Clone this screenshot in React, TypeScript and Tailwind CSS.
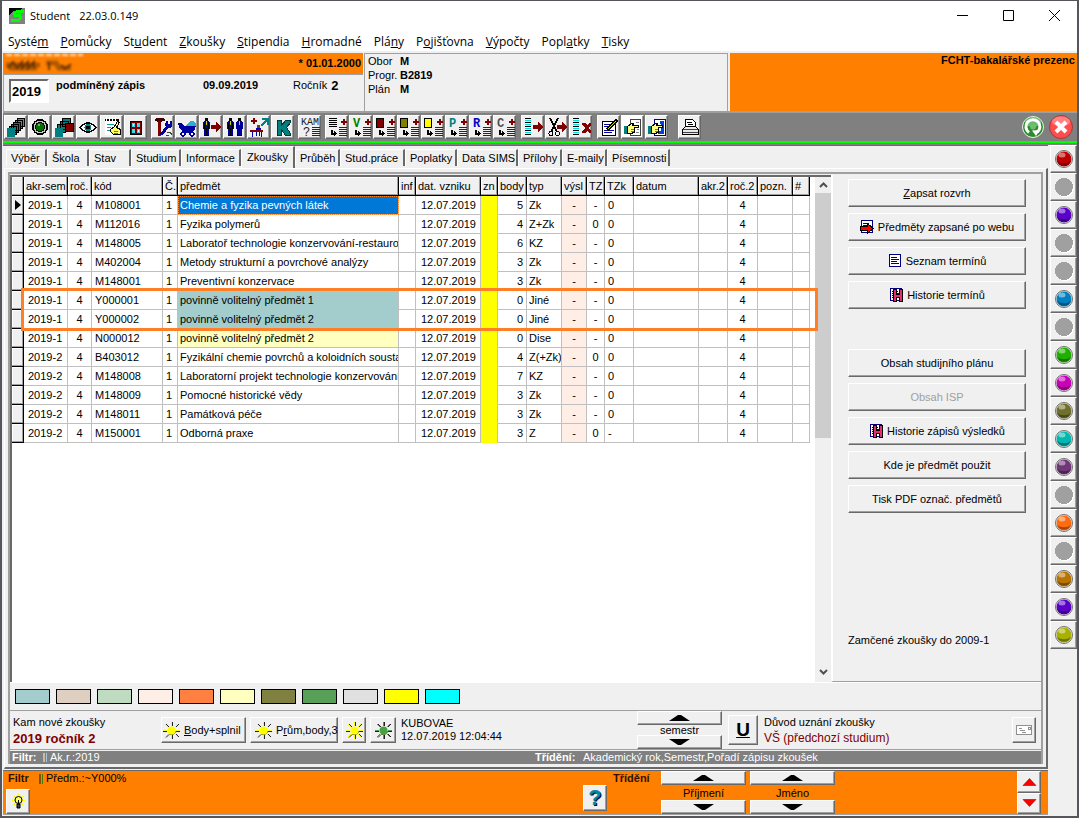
import type { ReactNode } from "react";

const RAISED =
  "border border-t-white border-l-white border-r-[#696969] border-b-[#696969] bg-[#f0f0f0] shadow-[inset_-1px_-1px_0_#a0a0a0]";

const MENU = [
  ["Systé", "m", ""],
  ["", "P", "omůcky"],
  ["St", "u", "dent"],
  ["", "Z", "koušky"],
  ["", "S", "tipendia"],
  ["", "H", "romadné"],
  ["Plá", "n", "y"],
  ["P", "o", "jišťovna"],
  ["", "V", "ýpočty"],
  ["Popl", "a", "tky"],
  ["", "T", "isky"],
];

const TABS = [
  { label: "Výběr", width: "w-[41px]" },
  { label: "Škola", width: "w-[42px]" },
  { label: "Stav", width: "w-[42px]" },
  { label: "Studium", width: "w-[50px]" },
  { label: "Informace", width: "w-[60px]" },
  { label: "Zkoušky", width: "w-[54px]", active: true },
  { label: "Průběh", width: "w-[45px]" },
  { label: "Stud.práce", width: "w-[65px]" },
  { label: "Poplatky", width: "w-[52px]" },
  { label: "Data SIMS", width: "w-[61px]" },
  { label: "Přílohy", width: "w-[44px]" },
  { label: "E-maily", width: "w-[45px]" },
  { label: "Písemnosti", width: "w-[63px]" },
];

const COLUMNS = [
  { label: "", width: "w-[12px]" },
  { label: "akr-sem", width: "w-[44px]" },
  { label: "roč.", width: "w-[24px]" },
  { label: "kód", width: "w-[71px]" },
  { label: "Č.", width: "w-[15px]" },
  { label: "předmět", width: "w-[221px]" },
  { label: "inf", width: "w-[17px]" },
  { label: "dat. vzniku", width: "w-[65px]" },
  { label: "zn", width: "w-[17px]" },
  { label: "body", width: "w-[29px]" },
  { label: "typ", width: "w-[35px]" },
  { label: "výsl", width: "w-[25px]" },
  { label: "TZ", width: "w-[18px]" },
  { label: "TZk", width: "w-[29px]" },
  { label: "datum", width: "w-[65px]" },
  { label: "akr.2", width: "w-[29px]" },
  { label: "roč.2", width: "w-[30px]" },
  { label: "pozn.", width: "w-[35px]" },
  { label: "#", width: "w-[17px]" },
];

type Row = {
  sem: string;
  code: string;
  name: string;
  points: number;
  type: string;
  tz: string;
  tzk: string;
  fill?: string;
};

const ROWS: Row[] = [
  { sem: "2019-1", code: "M108001", name: "Chemie a fyzika pevných látek", points: 5, type: "Zk", tz: "-", tzk: "0", fill: "bg-[#0078d7] text-white outline-1 -outline-offset-1 outline-dotted outline-[#ff8728]" },
  { sem: "2019-1", code: "M112016", name: "Fyzika polymerů", points: 4, type: "Z+Zk", tz: "0", tzk: "0" },
  { sem: "2019-1", code: "M148005", name: "Laboratoř technologie konzervování-restauro", points: 6, type: "KZ", tz: "-", tzk: "0" },
  { sem: "2019-1", code: "M402004", name: "Metody strukturní a povrchové analýzy", points: 3, type: "Zk", tz: "-", tzk: "0" },
  { sem: "2019-1", code: "M148001", name: "Preventivní konzervace", points: 3, type: "Zk", tz: "-", tzk: "0" },
  { sem: "2019-1", code: "Y000001", name: "povinně volitelný předmět 1", points: 0, type: "Jiné", tz: "-", tzk: "0", fill: "bg-[#a3cccc]" },
  { sem: "2019-1", code: "Y000002", name: "povinně volitelný předmět 2", points: 0, type: "Jiné", tz: "-", tzk: "0", fill: "bg-[#a3cccc]" },
  { sem: "2019-1", code: "N000012", name: "povinně volitelný předmět 2", points: 0, type: "Dise", tz: "-", tzk: "0", fill: "bg-[#ffffc0]" },
  { sem: "2019-2", code: "B403012", name: "Fyzikální chemie povrchů a koloidních soustav", points: 4, type: "Z(+Zk)", tz: "0", tzk: "0" },
  { sem: "2019-2", code: "M148008", name: "Laboratorní projekt technologie konzervování", points: 7, type: "KZ", tz: "-", tzk: "0" },
  { sem: "2019-2", code: "M148009", name: "Pomocné historické vědy", points: 3, type: "Zk", tz: "-", tzk: "0" },
  { sem: "2019-2", code: "M148011", name: "Památková péče", points: 3, type: "Zk", tz: "-", tzk: "0" },
  { sem: "2019-2", code: "M150001", name: "Odborná praxe", points: 3, type: "Z", tz: "0", tzk: "-" },
];

const SWATCHES = [
  "bg-[#a3cccc]",
  "bg-[#dfcfc0]",
  "bg-[#c0dcc0]",
  "bg-[#ffeee6]",
  "bg-[#ff8040]",
  "bg-[#ffffc0]",
  "bg-[#808040]",
  "bg-[#58a058]",
  "bg-[#e0e0e0]",
  "bg-[#ffff00]",
  "bg-[#00ffff]",
];

const BALLS = [
  "#c00000", "", "#5a00c8", "", "", "#0080c0", "", "#20b000", "#c800b8",
  "#70702c", "#00b8b0", "#703878", "", "#ff6c10", "", "#b87400", "#5a00c8", "#a8b000",
];

type Layer = { d: string; fill?: string; stroke?: string; w?: number };

function Art({ layers = [], children }: { layers?: Layer[]; children?: ReactNode }) {
  return (
    <svg viewBox="0 0 20 20" width="20" height="20" shapeRendering="crispEdges" aria-hidden="true">
      {layers.map((l, i) => (
        <path key={i} d={l.d} fill={l.fill ?? "none"} stroke={l.stroke} strokeWidth={l.w ?? 1} />
      ))}
      {children}
    </svg>
  );
}

const RED = "#800000";
const TEAL = "#008080";
const NAVY = "#000080";

// small list, red plus and an arrow shared by all "add" buttons
const ADD_BASE: Layer[] = [
  { d: "M12 10.5h8M12 12.5h8M12 14.5h8M12 16.5h8M12 18.5h8", stroke: RED },
  { d: "M14 4h2v-2h2v2h2v2h-2v2h-2v-2h-2z", fill: RED },
  { d: "M4.5 13v3.5h3", stroke: "#000", w: 2 },
  { d: "M7 13l3 3.5l-3 3.5z", fill: "#000" },
];

function AddIcon({ layers = [], letter, color }: { layers?: Layer[]; letter?: string; color?: string }) {
  return (
    <Art layers={[...ADD_BASE, ...layers]}>
      {letter && (
        <text x="2" y="10" fill={color} fontFamily="Liberation Mono" fontSize="12" fontWeight="bold">
          {letter}
        </text>
      )}
    </Art>
  );
}

const STRIPES: Layer[] = [
  { d: "M2 1.5h6M2 5.5h6M2 9.5h6M2 13.5h6M2 17.5h6", stroke: "#000" },
  { d: "M2 3.5h6M2 7.5h6M2 11.5h6M2 15.5h6", stroke: "#00e0e0" },
];
const RED_ARROW = "M10 8h5v-4l5 6l-5 6v-4h-5z";

const person = (x: number): Layer[] => [
  { d: `M${x + 2} 1h3v3h-3z`, fill: "#000" },
  { d: `M${x + 1} 4h5v1h1v7h-1v7h-5v-7h-1v-7h1z`, fill: "#0000a0" },
  { d: `M${x + 1.5} 6v6M${x + 5.5} 6v6M${x + 3.5} 11v8M${x + 1} 18.5h5`, stroke: "#000" },
  { d: `M${x + 3} 4h1v4h-1z`, fill: "#d0d000" },
];

const PASSING_HAND: Layer[] = [
  { d: "M1 9h3v8h-3z", fill: TEAL },
  { d: "M4.5 9.5l4-3h2l-1 2h6v2h-4v5h-2v1h-5z", fill: "#ffff80", stroke: "#000" },
  { d: "M8 12.5h3M8 14.5h3", stroke: "#808000" },
];

const TOOL_GROUPS: { title: string; icon: ReactNode; lit?: boolean }[][] = [
  [
    {
      title: "Karty",
      icon: (
        <Art
          layers={[
            { d: "M11.5 1.5h7v8h-7zM9.5 3.5h7v8h-7z", fill: "#909000", stroke: "#000" },
            { d: "M7.5 5.5h7v8h-7zM5.5 7.5h7v8h-7zM3.5 9.5h7v8h-7z", fill: TEAL, stroke: "#000" },
            { d: "M1 11h8v9h-8z", fill: TEAL },
          ]}
        />
      ),
    },
    {
      title: "Výběr",
      icon: (
        <Art>
          <circle cx="10" cy="10" r="8" fill="#000" />
          <circle cx="10" cy="10" r="6.500" fill="#c8c8c8" />
          <circle cx="10" cy="10" r="5" fill="#000" />
          <circle cx="10" cy="10" r="4" fill="#007000" />
          <path d="M8 7h2v2h-2z" fill="#60c060" />
        </Art>
      ),
    },
    {
      title: "Skupiny",
      icon: (
        <Art
          layers={[
            { d: "M8.5 1.5h8v8h-8zM6.5 4.5h8v8h-8zM3.5 7.5h8v8h-8z", fill: TEAL, stroke: "#000" },
            { d: "M1 11h8v9h-8z", fill: TEAL },
            { d: "M11.5 6.5h8v8h-8z", fill: RED, stroke: "#000" },
          ]}
        />
      ),
    },
    {
      title: "Náhled",
      icon: (
        <Art>
          <path d="M2 10.500q8-9 16 0q-8 9-16 0z" fill="#fff" stroke="#000" strokeWidth="1.500" />
          <circle cx="10" cy="10.500" r="3.500" fill={TEAL} />
          <circle cx="10" cy="10.500" r="2" fill="#000" />
        </Art>
      ),
    },
    {
      title: "Poznámky",
      icon: (
        <Art
          layers={[
            { d: "M3 3h13v15h-13z", fill: "#fff" },
            { d: "M3 2.5h14", stroke: "#000", w: 2 },
            { d: "M4.5 0v4M7.5 0v4M10.5 0v4M13.5 0v4", stroke: "#fff" },
            { d: "M5 7.5h7M5 10.5h4M5 13.5h3", stroke: "#00a0a0" },
            { d: "M8.5 12.5l4-3l3-5l2 1l-3 5l4 2v5h-7l-3-3z", fill: "#ffff60", stroke: "#000" },
            { d: "M12 14.5h4M12 16.5h4", stroke: "#808000" },
          ]}
        />
      ),
    },
    {
      title: "Okno",
      icon: (
        <Art
          layers={[
            { d: "M4.5 4.5h11v13h-11z", fill: RED, stroke: "#000" },
            { d: "M6 6h3v4h-3zM11 6h3v4h-3zM6 12h3v4h-3zM11 12h3v4h-3z", fill: "#40d8e8" },
            { d: "M7 7h1v2h-1zM12 13h1v2h-1z", fill: "#fff" },
          ]}
        />
      ),
    },
  ],
  [
    {
      title: "Nástroje",
      icon: (
        <Art
          layers={[
            { d: "M2 2l2-1h6l2 2v1h-3l-1 2h-3l-1-2h-2z", fill: "#400000" },
            { d: "M5 4h3v15h-3z", fill: RED },
            { d: "M8 18l7-9", stroke: "#0000a0", w: 3 },
            { d: "M13 4h2v3h2v-3h2v5l-2 2h-3l-2-2z", fill: "#0000a0" },
            { d: "M14 15.5h3l2 2M13 18.5h3", stroke: "#404040" },
          ]}
        />
      ),
    },
    {
      title: "Kočárek",
      icon: (
        <Art>
          <path d="M1 6h3l3 3h12l-2 5l-3 2h-7l-4-4l-2-5z" fill="#0000a0" />
          <path d="M9 9l4-5h3l3 3v2z" fill="#30b0c8" />
          <circle cx="6" cy="17" r="2" fill="#fff" stroke="#0000a0" strokeWidth="1.500" />
          <circle cx="15" cy="17" r="2" fill="#fff" stroke="#0000a0" strokeWidth="1.500" />
        </Art>
      ),
    },
    { title: "Přesun studenta", icon: <Art layers={[...person(2), { d: RED_ARROW, fill: RED }]} /> },
    { title: "Dvojice", icon: <Art layers={[...person(2), ...person(11)]} /> },
    {
      title: "Postup",
      icon: (
        <Art
          layers={[
            { d: "M2 3h2v-2h2v2h2v2h-2v2h-2v-2h-2z", fill: RED },
            { d: "M12 9l6-6", stroke: TEAL, w: 2 },
            { d: "M13 1h7v7h-2v-3l-3-2h-2z", fill: TEAL },
            { d: "M8 8h3v3h-3z", fill: "#505000" },
            { d: "M7 11h5v3h-5z", fill: "#0000c0" },
            { d: "M1 13h13v2h-13z", fill: RED },
            { d: "M3.5 15v5M12.5 15v5M7.5 15v4M10.5 15v4", stroke: "#0000c0" },
          ]}
        />
      ),
    },
    {
      title: "K",
      icon: (
        <Art layers={[{ d: "M4.5 3.5h4v5l4-5h5v2l-4 5l4 6v2h-5l-4-6v6h-4z", fill: TEAL, stroke: "#003838" }]} />
      ),
    },
  ],
  [
    {
      title: "Kam",
      icon: (
        <Art layers={[{ d: "M12 10.5h8M12 12.5h8M12 14.5h8M12 16.5h8M12 18.5h8", stroke: RED }]}>
          <text x="1" y="8" fill="#202020" fontFamily="Liberation Mono" fontSize="10">KAM</text>
          <text x="3" y="19" fill="#202020" fontFamily="Liberation Mono" fontSize="12">?</text>
        </Art>
      ),
    },
  ],
  [
    { title: "Přidat seznam", icon: <AddIcon layers={[{ d: "M2 1.5h8M2 3.5h8M2 5.5h8M2 7.5h8M2 9.5h8", stroke: "#000" }]} /> },
    { title: "Přidat V", icon: <AddIcon letter="V" color="#008000" /> },
    { title: "Přidat červené", icon: <AddIcon layers={[{ d: "M1.5 1.5h7v9h-7z", fill: RED, stroke: "#000" }]} /> },
    { title: "Přidat olivové", icon: <AddIcon layers={[{ d: "M1.5 1.5h7v9h-7z", fill: "#808000", stroke: "#000" }]} /> },
    { title: "Přidat žluté", icon: <AddIcon layers={[{ d: "M1.5 1.5h7v9h-7z", fill: "#ffff00", stroke: "#000" }]} /> },
    { title: "Přidat P", icon: <AddIcon letter="P" color={TEAL} /> },
    { title: "Přidat R", icon: <AddIcon letter="R" color="#0000c0" /> },
    { title: "Přidat C", icon: <AddIcon letter="C" color="#505050" /> },
  ],
  [
    { title: "Vyjmout ze seznamu", icon: <Art layers={[...STRIPES, { d: RED_ARROW, fill: RED }]} /> },
    {
      title: "Odstřihnout",
      icon: (
        <Art layers={[{ d: RED_ARROW, fill: RED }]}>
          <path d="M3 1l7 14M11 1l-7 14" stroke="#000" strokeWidth="1.500" />
          <circle cx="4" cy="16.500" r="2" fill="none" stroke="#000" />
          <circle cx="10.500" cy="16.500" r="2" fill="none" stroke="#000" />
        </Art>
      ),
    },
    { title: "Smazat", icon: <Art layers={[...STRIPES, { d: "M11 6h3l2 2l2-2h2v2l-2 3l2 3v2h-2l-2-2l-2 2h-3v-2l3-3l-3-3z", fill: RED }]} /> },
  ],
  [
    {
      title: "Upravit",
      icon: (
        <Art
          layers={[
            { d: "M3.5 4.5h13v14h-13z", fill: "#fff", stroke: "#000" },
            { d: "M5 7.5h7M5 9.5h5M5 13.5h10M5 15.5h8", stroke: "#0000a0" },
            { d: "M8 13l10-10", stroke: "#000", w: 3 },
            { d: "M9 12l8-8", stroke: "#e0e000" },
          ]}
        />
      ),
    },
    {
      title: "Předat list",
      lit: true,
      icon: (
        <Art
          layers={[
            { d: "M7.5 2.5h10v16h-10z", fill: "#fff", stroke: "#404040" },
            { d: "M13 5.5h3M13 8.5h3M14 12.5h2M13 15.5h3", stroke: "#808080" },
            ...PASSING_HAND,
          ]}
        />
      ),
    },
    {
      title: "Předat složku",
      icon: (
        <Art
          layers={[
            { d: "M7.5 2.5h11v16h-11z", fill: "#fff", stroke: "#000080" },
            { d: "M13 4h4v13h-6v-3h3v-7h-1z", fill: "#0040e0" },
            ...PASSING_HAND,
          ]}
        />
      ),
    },
  ],
  [
    {
      title: "Tisk",
      icon: (
        <Art
          layers={[
            { d: "M5.5 9v-6.500h7l3 3v4z", fill: "#fff", stroke: "#000" },
            { d: "M7 5.5h5M8 7.5h5", stroke: "#000" },
            { d: "M2.5 12.5l3-3h10l3 3v5h-16z", fill: "#e8e8e8", stroke: "#000" },
            { d: "M3 12.500h15M3 15.500h15", stroke: "#404040" },
          ]}
        />
      ),
    },
  ],
];

const TOOL_GAPS = ["ml-px", "ml-[3px]", "ml-[3px]", "ml-[3px]", "ml-1", "ml-1", "ml-[9px]"];

function Toolbar() {
  return (
    <div className="flex items-center border-t-2 border-[#a0a0a0] bg-[#808080] pt-0.5">
      {TOOL_GROUPS.map((group, g) => (
        <div key={g} className={`flex shrink-0 ${TOOL_GAPS[g]}`}>
          {group.map((tool) => (
            <button
              key={tool.title}
              aria-label={tool.title}
              className={`mr-px flex h-6 w-[23px] items-center justify-center ${RAISED} ${tool.lit ? "bg-white" : ""}`}
            >
              {tool.icon}
            </button>
          ))}
        </div>
      ))}
      <div className="ml-auto flex gap-1 pr-1">
        <button aria-label="Obnovit">
          <svg viewBox="0 0 24 24" className="h-6 w-6">
            <circle cx="12" cy="12" r="10.500" fill="#2f8a2f" stroke="#e8f8e8" strokeWidth="1" />
            <ellipse cx="12" cy="7" rx="8" ry="5" fill="#9ad79a" opacity=".6" />
            <circle cx="12" cy="11.500" r="3" fill="#6cc06c" />
            <path d="M8 17.500a7 7 0 1 1 8.500-.5" fill="none" stroke="#fff" strokeWidth="3" />
            <path d="M11 15.500l8-.5l-4 6z" fill="#fff" />
          </svg>
        </button>
        <button aria-label="Zavřít záznam">
          <svg viewBox="0 0 24 24" className="h-6 w-6">
            <circle cx="12" cy="12" r="11.500" fill="#ff4d4d" stroke="#9a3030" strokeWidth=".8" />
            <ellipse cx="12" cy="6.500" rx="9" ry="5" fill="#ff9a9a" opacity=".7" />
            <path d="M7 7l10 10M17 7l-10 10" stroke="#fff" strokeWidth="4" />
          </svg>
        </button>
      </div>
    </div>
  );
}

function PageIcon({ kind }: { kind: "web" | "list" | "history" }) {
  return (
    <svg viewBox="0 0 14 14" width="14" height="14" shapeRendering="crispEdges" aria-hidden="true">
      <path d="M1.500 .5h11v12h-11z" fill="#fff" stroke="#000080" />
      <path d="M3 3.500h6M3 5.500h8M3 7.500h6M3 9.500h8" stroke="#000080" />
      {kind === "web" && <path d="M.5 6.500h7v-3l5.500 5l-5.500 5v-3h-7z" fill="#ff0000" stroke="#000" />}
      {kind === "history" && (
        <path d="M4.500 1.500h3v5h3v-5h3v12h-3v-4h-3v4h-3z" fill="#e03070" stroke="#000" />
      )}
    </svg>
  );
}

function SideButton({ icon, disabled, children }: { icon?: "web" | "list" | "history"; disabled?: boolean; children: ReactNode }) {
  return (
    <button
      disabled={disabled}
      className={`flex h-7 items-center justify-center gap-1 disabled:text-[#a0a0a0] ${RAISED}`}
    >
      {icon && <PageIcon kind={icon} />}
      <span>{children}</span>
    </button>
  );
}

function Sun({ core }: { core: string }) {
  return (
    <svg viewBox="0 0 17 17" width="17" height="17" className="shrink-0" aria-hidden="true">
      <path d="M9.500 0v4M9.500 13v4M0 9.500h4M13 9.500h4M3 2l3 3M13 12l3 3M16 2l-3 3M3 15.500l3-3" stroke="#202020" strokeWidth="1" />
      <path d="M8.500 0v4M8.500 13v4M0 8.500h4M13 8.500h4M2 2l3 3M12 12l3 3M15 2l-3 3M2 15l3-3" stroke={core} strokeWidth="1" />
      <path d="M6 12q5 2 7-3" fill="none" stroke="#606000" />
      <circle cx="8.500" cy="8.500" r="4" fill={core} />
    </svg>
  );
}

function Spinner({ label, className = "" }: { label: string; className?: string }) {
  return (
    <div className={`flex w-[85px] flex-col justify-between text-center ${className}`}>
      <button aria-label={`${label} nahoru`} className={`flex h-[14px] items-center justify-center ${RAISED}`}>
        <svg viewBox="0 0 21 6" width="21" height="6"><path d="M0 6l9-6h3l9 6z" /></svg>
      </button>
      <span className="leading-[10px]">{label}</span>
      <button aria-label={`${label} dolů`} className={`flex h-[14px] items-center justify-center ${RAISED}`}>
        <svg viewBox="0 0 21 6" width="21" height="6"><path d="M0 0l9 6h3l9-6z" /></svg>
      </button>
    </div>
  );
}

function Ball({ color }: { color: string }) {
  if (!color) {
    return (
      <svg viewBox="0 0 20 20" width="20" height="20" shapeRendering="crispEdges" aria-hidden="true">
        <circle cx="11" cy="11" r="9" fill="#fff" />
        <circle cx="10" cy="10" r="9" fill="#a0a0a0" />
      </svg>
    );
  }
  return (
    <svg viewBox="0 0 20 20" width="20" height="20" aria-hidden="true">
      <circle cx="10" cy="10" r="8.500" fill="#e8e8e8" stroke="#707070" strokeWidth="1" />
      <circle cx="10" cy="10" r="7.500" fill={color} />
      <path d="M3 12a7.500 7.500 0 0 0 14 0a9 6 0 0 1-14 0z" fill="#000" opacity=".35" />
      <ellipse cx="8" cy="6" rx="3.500" ry="2.500" fill="#fff" opacity=".45" />
    </svg>
  );
}

function ExamTable() {
  const cell = "border-r border-b border-[#c0c0c0]";
  return (
    <div className="relative w-[798px] shrink-0">
      <table className="w-[798px] table-fixed border-separate border-spacing-0 leading-[18px]">
        <colgroup>
          {COLUMNS.map((c, i) => (
            <col key={i} className={c.width} />
          ))}
        </colgroup>
        <thead>
          <tr className="h-[19px]">
            {COLUMNS.map((c, i) => (
              <th
                key={i}
                className="h-[19px] overflow-hidden border-r border-b border-black bg-[#f0f0f0] py-0 pr-0 pl-0.5 text-left font-normal whitespace-nowrap shadow-[inset_-1px_-1px_0_#a0a0a0,inset_1px_1px_0_#fff]"
              >
                {c.label}
              </th>
            ))}
          </tr>
        </thead>
        <tbody className="[&_td]:h-[19px] [&_td]:overflow-hidden [&_td]:py-0 [&_td]:whitespace-nowrap">
          {ROWS.map((r, i) => (
            <tr key={i}>
              <td className="border-r border-b border-black bg-[#f0f0f0] p-0 shadow-[inset_-1px_-1px_0_#a0a0a0,inset_1px_1px_0_#fff]">
                {i === 0 && (
                  <svg viewBox="0 0 6 10" width="6" height="10" className="ml-[3px]"><path d="M0 0l6 5l-6 5z" /></svg>
                )}
              </td>
              <td className={`pl-1 ${cell}`}>{r.sem}</td>
              <td className={`text-center ${cell}`}>4</td>
              <td className={`pl-[3px] ${cell}`}>{r.code}</td>
              <td className={`pl-[3px] ${cell}`}>1</td>
              <td className={`pl-0.5 ${cell} ${r.fill ?? ""}`}>{r.name}</td>
              <td className={cell} />
              <td className={`pr-1 text-right ${cell}`}>12.07.2019</td>
              <td className={`bg-[#ffff00] ${cell} border-b-[#ffff00]`} />
              <td className={`pr-[3px] text-right ${cell}`}>{r.points}</td>
              <td className={`pl-0.5 ${cell}`}>{r.type}</td>
              <td className={`bg-[#ffeee6] text-center ${cell}`}>-</td>
              <td className={`text-center ${cell}`}>{r.tz}</td>
              <td className={`pl-[3px] ${cell}`}>{r.tzk}</td>
              <td className={cell} />
              <td className={cell} />
              <td className={`text-center ${cell}`}>4</td>
              <td className={cell} />
              <td className={cell} />
            </tr>
          ))}
        </tbody>
      </table>
      {/* frame over the two elective rows */}
      <div className="absolute top-[111px] left-[9px] h-[43px] w-[797px] border-3 border-[#ff7f27]" />
    </div>
  );
}

function Chevron({ down }: { down?: boolean }) {
  return (
    <svg viewBox="0 0 9 6" width="9" height="6" aria-hidden="true">
      <path d={down ? "M1 1l3.500 3.500l3.500-3.500" : "M1 5l3.500-3.500l3.500 3.500"} fill="none" stroke="#505050" strokeWidth="2" />
    </svg>
  );
}

function HeaderPanel() {
  return (
    <div className="flex h-[58px]">
      <div className="flex w-[360px] flex-col">
        <div className="flex h-[21px] items-center justify-between bg-[#ff8000] pr-0.5 font-bold">
          <svg viewBox="0 0 80 20" className="h-5 w-20 blur-[1px]" aria-hidden="true">
            <path d="M3 11h34M6 14h28M43 9h10l3 5h12" fill="none" stroke="#b05800" strokeWidth="5" />
            <path d="M5 14l5-6l4 6l5-6v6l6-6v6l6-6v6M46 8v8M58 11l4 4l6-5" fill="none" stroke="#6a3400" strokeWidth="2" />
            <path d="M3 1h78" stroke="#ffe0c0" strokeWidth="2" strokeDasharray="6 2" />
          </svg>
          <span>* 01.01.2000</span>
        </div>
        <div className="flex flex-1 border-t border-l border-[#a0a0a0] pt-1">
          <input
            aria-label="Rok"
            defaultValue="2019"
            className="ml-[5px] h-6 w-10 border-2 border-t-[#696969] border-r-white border-b-white border-l-[#696969] bg-white pl-px text-[13px] font-bold"
          />
          <span className="ml-[7px] w-[147px] font-bold">podmíněný zápis</span>
          <span className="w-[90px] font-bold">09.09.2019</span>
          <span>Ročník</span>
          <b className="ml-1 text-[13px] leading-[13px]">2</b>
        </div>
      </div>
      <div className="ml-px flex w-[364px] flex-col border-t border-r border-l border-t-[#a0a0a0] border-r-[#a0a0a0] border-l-[#a0a0a0] pl-[3px] leading-[14px]">
        <div className="flex"><span className="w-8">Obor</span><b>M</b></div>
        <div className="flex"><span className="w-8">Progr.</span><b>B2819</b></div>
        <div className="flex"><span className="w-8">Plán</span><b>M</b></div>
      </div>
      <div className="ml-0.5 flex flex-1 justify-end overflow-hidden bg-[#ff8000]">
        <b className="w-[136px] overflow-hidden leading-[14px] whitespace-nowrap">FCHT-bakalářské prezenc</b>
      </div>
    </div>
  );
}

export default function App() {
  return (
    <div className="flex h-screen min-h-[760px] flex-col overflow-hidden border-t border-r-2 border-b-2 border-l-2 border-[#55555c] bg-[#f0f0f0] pb-px pl-px font-['Liberation_Sans',Arial,sans-serif] text-[11px] leading-[13px] text-black">
      <div className="-ml-px bg-white font-['Open_Sans','Noto_Sans',sans-serif] text-[12px]">
        <div className="flex h-[29px] items-center pl-[7px]">
          <svg viewBox="0 0 16 16" width="16" height="16" shapeRendering="crispEdges" aria-hidden="true">
            <path d="M0 0h16v16h-16z" fill="#808080" />
            <path d="M0 0h13l-3 3h-5l-5 4z" fill="#000" />
            <path d="M14 3.500h-6l-3 2l1 2h5l1 2l-2 3h-8" fill="none" stroke="#00ff00" strokeWidth="2.500" />
            <path d="M15 1v4h-2v-2z" fill="#00ff00" />
          </svg>
          <span className="ml-[5px] text-[11px]">Student</span>
          <span className="ml-[9px] text-[11px]">22.03.0.149</span>
          <div className="ml-auto flex">
            {["M0 5.500h11", "M.5.500h10v10h-10z", "M0 0l11 11M11 0l-11 11"].map((d, i) => (
              <button key={i} aria-label={["Minimalizovat", "Maximalizovat", "Zavřít"][i]} className="flex h-7 w-[46px] items-center justify-center">
                <svg viewBox="0 0 11 11" width="11" height="11"><path d={d} fill="none" stroke="#000" /></svg>
              </button>
            ))}
          </div>
        </div>
        <nav className="flex h-[21px] items-center gap-3 pt-px pl-[6px]">
          {MENU.map(([before, key, after]) => (
            <button key={before + key + after}>
              {before}<u>{key}</u>{after}
            </button>
          ))}
        </nav>
      </div>
      <div className="h-0.5 shrink-0" />
      <HeaderPanel />
      <Toolbar />
      <div className="h-1.5 shrink-0 border-y-2 border-[#808080] bg-[#00ff00]" />

      <div className="flex min-h-0 flex-1">
        <div className="flex min-w-0 flex-1 flex-col border-t border-[#696969]">
          <div role="tablist" className="flex h-[22px] items-end pl-[3px]">
            {TABS.map((t) => (
              <button
                key={t.label}
                role="tab"
                aria-selected={!!t.active}
                className={`${t.width} border-t border-r-2 border-l border-t-white border-r-[#696969] border-l-white text-left whitespace-nowrap ${
                  t.active ? "h-[22px] pb-px pl-[5px]" : "mb-0.5 h-[17px] pt-px pl-1"
                }`}
              >
                {t.label}
              </button>
            ))}
          </div>

          <div className="ml-px flex min-h-0 flex-1 flex-col border-t border-r-2 border-b-2 border-l border-t-white border-r-[#696969] border-b-[#696969] border-l-white p-[3px]">
            <div className="flex min-h-0 flex-1 flex-col border-x-2 border-t-2 border-[#a0a0a0]">
              <div className="flex min-h-0 flex-1 pt-px">
                <div className="flex w-[821px] shrink-0 border-t-2 border-l-2 border-[#696969] bg-white">
                  <ExamTable />
                  <div className="ml-auto flex w-4 flex-col items-center bg-[#f0f0f0]">
                    <button aria-label="Nahoru" className="flex h-4 items-center"><Chevron /></button>
                    <div className="h-[245px] w-full bg-[#cdcdcd]" />
                    <button aria-label="Dolů" className="mt-auto flex h-5 items-center"><Chevron down /></button>
                  </div>
                </div>
                <div className="flex flex-1 flex-col border-b border-l-2 border-b-[#a0a0a0] border-l-white pt-1">
                  <div className="mr-[15px] ml-[15px] flex flex-1 flex-col gap-1.5">
                    <SideButton><u>Z</u>apsat rozvrh</SideButton>
                    <SideButton icon="web">Předměty zapsané po webu</SideButton>
                    <SideButton icon="list">Seznam termínů</SideButton>
                    <SideButton icon="history">Historie termínů</SideButton>
                    <div className="h-7" />
                    <SideButton>Obsah studijního plánu</SideButton>
                    <SideButton disabled>Obsah ISP</SideButton>
                    <SideButton icon="history">Historie zápisů výsledků</SideButton>
                    <SideButton>Kde je předmět použit</SideButton>
                    <SideButton>Tisk PDF označ. předmětů</SideButton>
                    <p className="mt-auto mb-[34px]">Zamčené zkoušky do 2009-1</p>
                  </div>
                </div>
              </div>

              <div className="flex h-7 shrink-0 items-center gap-1.5 border-t border-white pl-[5px]">
                {SWATCHES.map((s) => (
                  <span key={s} className={`h-[15px] w-[35px] border border-black ${s}`} />
                ))}
              </div>

              <div className="flex h-10 shrink-0 items-center border-t border-b border-[#a0a0a0] pl-[3px]">
                <div className="flex h-full w-[148px] flex-col justify-center gap-[3px]">
                  <span>Kam nové zkoušky</span>
                  <b className="text-[13px] text-[#800000]">2019 ročník 2</b>
                </div>
                <div className="flex gap-1">
                  <button className={`flex h-[26px] w-[85px] items-center gap-1 pl-px ${RAISED}`}>
                    <Sun core="#ffff00" /><span><u>B</u>ody+splnil</span>
                  </button>
                  <button className={`flex h-[26px] w-[88px] items-center gap-1 pl-1 ${RAISED}`}>
                    <Sun core="#ffff00" /><span>P<u>r</u>ům,body,3</span>
                  </button>
                  <button aria-label="Známka" className={`flex h-[26px] w-6 items-center justify-center ${RAISED}`}><Sun core="#ffff00" /></button>
                  <button aria-label="Zapsáno" className={`flex h-[26px] w-[26px] items-center justify-center ${RAISED}`}><Sun core="#48a048" /></button>
                </div>
                <div className="ml-[5px] w-[236px]">KUBOVAE<br />12.07.2019 12:04:44</div>
                <Spinner label="semestr" className="h-[38px]" />
                <button className={`ml-1.5 h-[30px] w-[30px] text-[19px] leading-[26px] font-bold underline ${RAISED}`}>U</button>
                <div className="ml-1.5 flex flex-col gap-[3px]">
                  <span>Důvod uznání zkoušky</span>
                  <span className="text-[12px] text-[#800000]">VŠ (předchozí studium)</span>
                </div>
                <button aria-label="Zpráva" className={`mr-[5px] ml-auto flex h-[26px] w-6 items-center justify-center ${RAISED}`}>
                  <svg viewBox="0 0 16 10" width="16" height="10" shapeRendering="crispEdges">
                    <path d="M.5.500h15v9h-15z" fill="#fff" stroke="#909090" />
                    <path d="M3 3.500h3M4 5.500h5M6 7.500h4M12 2.500h2v2h-2z" stroke="#909090" fill="none" />
                  </svg>
                </button>
              </div>

              <div className="mt-px flex h-[13px] shrink-0 bg-[#808080] pl-0.5 text-white">
                <b className="w-[31px]">Filtr:</b>
                <span className="my-0.5 mr-px w-0.5 bg-[#d8b890]" />
                <span className="my-0.5 mr-[3px] w-px bg-[#a0c8e8]" />
                <span className="w-[485px]">Ak.r.:2019</span>
                <b className="w-12">Třídění:</b>
                <span>Akademický rok,Semestr,Pořadí zápisu zkoušek</span>
              </div>
            </div>
          </div>

          <div className="mt-px flex h-[45px] shrink-0 border-t border-b border-t-[#696969] border-b-[#a0a0a0] bg-[#ff8000]">
            <div className="flex w-[580px] flex-col justify-between pl-[3px]">
              <div className="flex pt-px pl-0.5">
                <b className="w-[31px] text-[#301000]">Filtr</b>
                <span className="mt-0.5 mr-px h-2.5 w-0.5 bg-[#805000]" />
                <span className="mt-0.5 mr-[3px] h-2.5 w-px bg-[#408000]" />
                <span>Předm.:~Y000%</span>
              </div>
              <button aria-label="Tip" className={`flex h-[25px] w-6 items-center justify-center ${RAISED}`}>
                <svg viewBox="0 0 15 17" width="15" height="17">
                  <path d="M7.500 1v12M1 7.500h13M3 3l9 9M12 3l-9 9" stroke="#ffff00" strokeWidth="2" />
                  <circle cx="7.500" cy="7" r="3.500" fill="#ffff60" stroke="#000" />
                  <path d="M6 11h3v4h-3zM7.500 7v4" fill="#404040" stroke="#000" />
                </svg>
              </button>
            </div>
            <button className={`mb-[3px] flex h-[26px] w-6 items-center justify-center self-end text-[22px] leading-none font-bold text-[#008a9a] [text-shadow:1px_1px_0_#000060] ${RAISED}`}>?</button>
            <b className="w-[54px] pt-px pl-1.5 text-[#301000]">Třídění</b>
            <Spinner label="Příjmení" />
            <Spinner label="Jméno" className="ml-1" />
            <div className="mr-[7px] ml-auto flex w-6 flex-col">
              <button aria-label="Předchozí" className={`flex flex-1 items-center justify-center ${RAISED}`}>
                <svg viewBox="0 0 15 8" width="15" height="8"><path d="M1 7.500l6.500-7l6.500 7z" fill="#ff0000" stroke="#600000" strokeWidth=".5" /></svg>
              </button>
              <button aria-label="Další" className={`flex flex-1 items-center justify-center ${RAISED}`}>
                <svg viewBox="0 0 15 8" width="15" height="8"><path d="M1 .5l6.500 7l6.500-7z" fill="#ff0000" stroke="#600000" strokeWidth=".5" /></svg>
              </button>
            </div>
          </div>
        </div>

        <div className="ml-0.5 flex w-[27px] shrink-0 flex-col">
          {BALLS.map((color, i) => (
            <button key={i} aria-label={`Značka ${i + 1}`} className={`flex h-7 shrink-0 items-center justify-center ${RAISED}`}>
              <Ball color={color} />
            </button>
          ))}
        </div>
      </div>
    </div>
  );
}
